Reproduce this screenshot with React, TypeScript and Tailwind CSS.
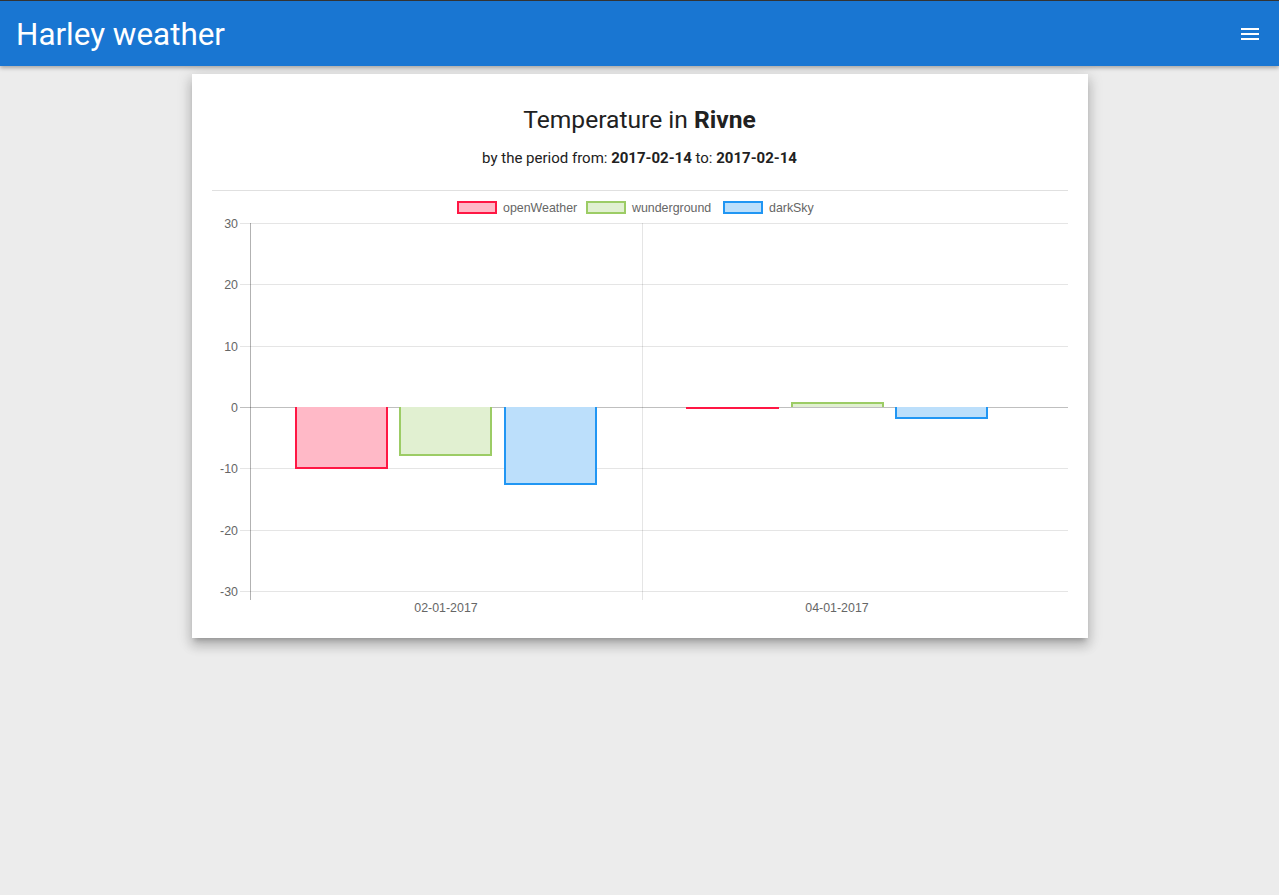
import React from 'react'

const Y0 = 216
const UNIT = 184 / 30

const y = (v: number) => Y0 - v * UNIT

interface Series {
  name: string
  stroke: string
  fill: string
  legendX: number
}

const series: Series[] = [
  { name: 'openWeather', stroke: '#ff1744', fill: '#ffb9c7', legendX: 245 },
  { name: 'wunderground', stroke: '#9ccc65', fill: '#e1f0d1', legendX: 374 },
  { name: 'darkSky', stroke: '#2196f3', fill: '#bcdffb', legendX: 511 },
]

// x of each bar's left edge, and its value
const bars = [
  { x: 83, v: -10, s: 0 },
  { x: 187, v: -7.8, s: 1 },
  { x: 292, v: -12.5, s: 2 },
  { x: 474, v: -0.15, s: 0 },
  { x: 579, v: 0.6, s: 1 },
  { x: 683, v: -1.75, s: 2 },
]

const BAR_W = 93

function Bar({ x, v, s }: { x: number; v: number; s: number }) {
  const { stroke, fill } = series[s]
  const top = Math.min(y(v), Y0)
  const h = Math.abs(y(v) - Y0)
  const end = Math.round(y(v))
  // border drawn on 3 sides, skipping the zero side
  const d = `M${x + 1} ${Y0} L${x + 1} ${end} L${x + BAR_W - 1} ${end} L${x + BAR_W - 1} ${Y0}`
  return (
    <g>
      <rect x={x} y={top} width={BAR_W} height={h} fill={fill} />
      <path d={d} fill="none" stroke={stroke} strokeWidth={2} />
    </g>
  )
}

function Chart() {
  const ticks = [30, 20, 10, 0, -10, -20, -30]
  return (
    <svg width={856} height={428} className="block" style={{ fontFamily: '"Liberation Sans", Arial, sans-serif' }}>
      {/* legend */}
      {series.map((s) => (
        <g key={s.name}>
          <rect x={s.legendX + 1} y={11} width={38} height={11} fill={s.fill} stroke={s.stroke} strokeWidth={2} />
          <text x={s.legendX + 46} y={20.5} fontSize={12.4} fill="#666">
            {s.name}
          </text>
        </g>
      ))}

      {/* horizontal grid + ticks */}
      {ticks.map((t) => (
        <g key={t}>
          <line
            x1={28}
            x2={856}
            y1={Math.round(y(t)) + 0.5}
            y2={Math.round(y(t)) + 0.5}
            stroke={t === 0 ? 'rgba(0,0,0,0.25)' : 'rgba(0,0,0,0.1)'}
          />
          <text x={26} y={Math.round(y(t)) + 4.5} fontSize={12.4} fill="#666" textAnchor="end">
            {t}
          </text>
        </g>
      ))}

      {/* vertical grid */}
      <line x1={38.5} x2={38.5} y1={32} y2={409} stroke="rgba(0,0,0,0.3)" />
      <line x1={430.5} x2={430.5} y1={32} y2={409} stroke="rgba(0,0,0,0.1)" />

      {bars.map((b, i) => (
        <Bar key={i} {...b} />
      ))}

      {/* x labels */}
      <text x={234} y={420.5} fontSize={12.4} fill="#666" textAnchor="middle">
        02-01-2017
      </text>
      <text x={625} y={420.5} fontSize={12.4} fill="#666" textAnchor="middle">
        04-01-2017
      </text>
    </svg>
  )
}

export default function App() {
  return (
    <div className="min-h-[895px] bg-[#ececec]" style={{ fontFamily: 'Roboto, "Noto Sans", sans-serif' }}>
      <header className="h-[66px] bg-[#1976d2] border-t border-[#333] flex items-center justify-between pl-4 pr-5 shadow-[0_2px_4px_rgba(0,0,0,0.3)] relative">
        <h1 className="text-[31.4px] text-white leading-none mt-[2px]">Harley weather</h1>
        <button className="flex flex-col gap-[3px] w-[18px]">
          <span className="h-[2px] w-full bg-white" />
          <span className="h-[2px] w-full bg-white" />
          <span className="h-[2px] w-full bg-white" />
        </button>
      </header>

      <main className="mx-auto mt-2 w-[896px] bg-white px-5 pt-[30px] pb-[19px] shadow-[0_8px_10px_1px_rgba(0,0,0,0.14),0_3px_14px_2px_rgba(0,0,0,0.12),0_5px_5px_-3px_rgba(0,0,0,0.2)]">
        <h2 className="text-center text-[24.6px] leading-[32px] text-[#212121]">
          Temperature in <b className="font-bold">Rivne</b>
        </h2>
        <p className="mt-3 text-center text-[15px] leading-5 text-[#212121]">
          by the period from: <b className="font-bold">2017-02-14</b> to: <b className="font-bold">2017-02-14</b>
        </p>
        <hr className="mt-[22px] border-t border-[#e0e0e0]" />
        <Chart />
      </main>
    </div>
  )
}
